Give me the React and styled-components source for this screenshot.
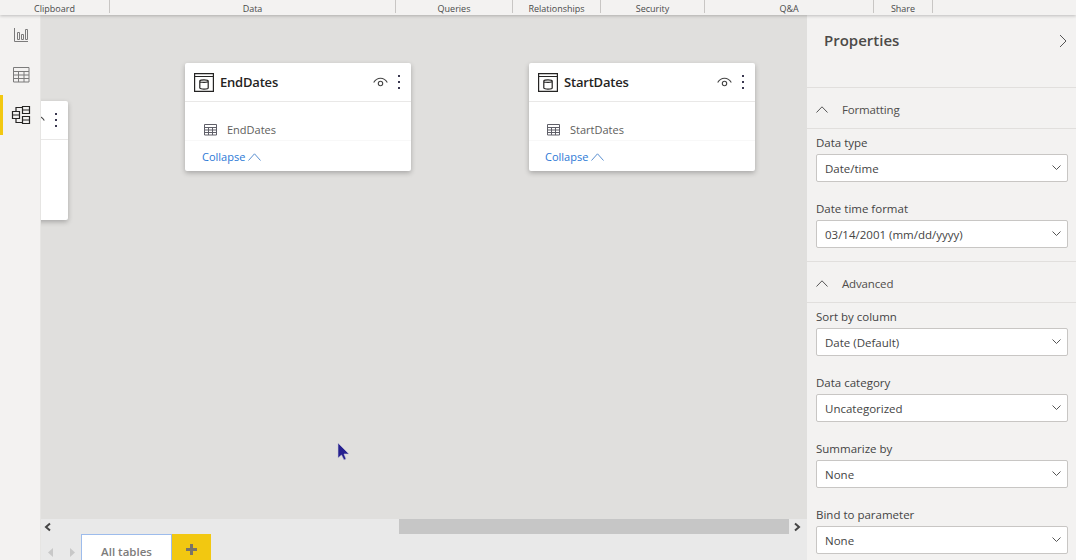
import React from "react";
import styled, { createGlobalStyle } from "styled-components";

const GlobalStyle = createGlobalStyle`
  html, body { margin: 0; padding: 0; height: 100%; overflow: hidden; }
  body { font-family: "Open Sans", "Noto Sans", "Liberation Sans", sans-serif; background: #f3f2f1; }
  * { box-sizing: border-box; }
`;

const ribbonGroups = [
  { label: "Clipboard", width: 110 },
  { label: "Data", width: 286 },
  { label: "Queries", width: 117 },
  { label: "Relationships", width: 88 },
  { label: "Security", width: 104 },
  { label: "Q&A", width: 169 },
  { label: "Share", width: 59 },
];

const tables = [
  { name: "EndDates", x: 144, inset: 9, fieldInset: 19, linkInset: 17 },
  { name: "StartDates", x: 488, inset: 9, fieldInset: 18, linkInset: 16 },
];

const fieldsFormatting = [
  { label: "Data type", value: "Date/time" },
  { label: "Date time format", value: "03/14/2001 (mm/dd/yyyy)" },
];

const fieldsAdvanced = [
  { label: "Sort by column", value: "Date (Default)" },
  { label: "Data category", value: "Uncategorized" },
  { label: "Summarize by", value: "None" },
  { label: "Bind to parameter", value: "None" },
];

const Page = styled.div`
  width: 1076px;
  height: 560px;
  display: flex;
  flex-direction: column;
  overflow: hidden;
`;

const Ribbon = styled.div`
  height: 15px;
  flex: none;
  display: flex;
  background: #f3f2f1;
  box-shadow: 0 1px 3px rgba(0, 0, 0, 0.22);
  position: relative;
  z-index: 2;
`;

const RibbonGroup = styled.div`
  height: 13px;
  width: ${(p) => p.$width}px;
  border-right: 1px solid #c8c6c4;
  font-size: 9px;
  line-height: 17px;
  color: #4a4a4a;
  text-align: center;
`;

const Body = styled.div`
  flex: 1;
  min-height: 0;
  display: flex;
`;

const Nav = styled.nav`
  width: 41px;
  flex: none;
  display: flex;
  flex-direction: column;
  background: #f3f2f1;
  border-right: 1px solid #e6e5e3;
`;

const NavItem = styled.div`
  height: 40px;
  display: flex;
  align-items: center;
  justify-content: center;
  padding-right: 1px;
  margin-left: ${(p) => (p.$active ? 0 : 3)}px;
  border-left: ${(p) => (p.$active ? "3px solid #f2c811" : "none")};
`;

const Main = styled.div`
  width: 766px;
  flex: none;
  display: flex;
  flex-direction: column;
`;

const Canvas = styled.div`
  height: 504px;
  flex: none;
  position: relative;
  overflow: hidden;
  background: #e0dfdd;
`;

const Card = styled.div`
  position: absolute;
  left: ${(p) => p.$x}px;
  top: ${(p) => p.$y}px;
  width: ${(p) => p.$w}px;
  height: ${(p) => p.$h}px;
  background: #fff;
  border-radius: 2px;
  box-shadow: 0 2px 5px rgba(0, 0, 0, 0.25);
  display: flex;
  flex-direction: column;
`;

const CardHeader = styled.div`
  height: 39px;
  flex: none;
  display: flex;
  align-items: center;
  padding: 0 8px 0 ${(p) => p.$inset}px;
  border-bottom: 1px solid #e9e8e7;
`;

const CardTitle = styled.div`
  flex: 1;
  margin-left: 6px;
  font-size: 13px;
  font-weight: 600;
  color: #252423;
  letter-spacing: -0.2px;
`;

const Dots = styled.div`
  width: 3px;
  margin-left: 10px;
  margin-right: 2px;
  display: flex;
  flex-direction: column;
  gap: 4px;
  span {
    width: 2px;
    height: 2px;
    background: #3a3850;
  }
`;

const FieldRow = styled.div`
  height: 39px;
  flex: none;
  padding: 19px 0 0 ${(p) => p.$inset}px;
  display: flex;
  align-items: flex-start;
  gap: 10px;
  font-size: 11px;
  line-height: 18px;
  color: #605e5c;
  border-bottom: 1px solid #f8f8f8;
  svg { margin-top: 3px; }
`;

const CollapseLink = styled.div`
  padding: 7px 0 0 ${(p) => p.$inset}px;
  display: flex;
  align-items: center;
  gap: 3px;
  font-size: 11px;
  line-height: 18px;
  color: #2b79d6;
`;

const Cursor = styled.svg`
  position: absolute;
  left: 296px;
  top: 427px;
`;

const HScroll = styled.div`
  height: 15px;
  flex: none;
  display: flex;
  align-items: center;
  background: #e9e9e9;
`;

const ScrollArrow = styled.div`
  width: ${(p) => p.$w}px;
  flex: none;
  display: flex;
  justify-content: center;
  padding-right: ${(p) => p.$pad || 0}px;
`;

const ScrollTrack = styled.div`
  flex: 1;
  height: 15px;
  padding-left: 344px;
`;

const ScrollThumb = styled.div`
  height: 15px;
  background: #c6c6c6;
`;

const TabBar = styled.div`
  flex: 1;
  min-height: 0;
  display: flex;
  align-items: stretch;
  background: #e9e9e9;
`;

const TabNav = styled.div`
  width: 40px;
  flex: none;
  display: flex;
  align-items: center;
  gap: 17px;
  padding: 10px 0 0 7px;
`;

const Tab = styled.div`
  width: 91px;
  flex: none;
  padding-top: 8px;
  background: #fff;
  border: 1px solid #9dbcec;
  border-bottom: none;
  font-size: 11.5px;
  font-weight: 600;
  line-height: 18px;
  color: #7d7c7b;
  text-align: center;
`;

const AddTab = styled.div`
  width: 39px;
  flex: none;
  display: flex;
  align-items: center;
  justify-content: center;
  padding-top: 5px;
  background: #f2c811;
`;

const Panel = styled.aside`
  flex: 1;
  min-width: 0;
  display: flex;
  flex-direction: column;
  overflow: hidden;
  background: #f3f2f1;
`;

const PanelHead = styled.div`
  height: 73px;
  flex: none;
  padding: 13px 9px 0 17px;
  display: flex;
  justify-content: space-between;
  align-items: flex-start;
  border-bottom: 1px solid #e1dfdd;
`;

const PanelTitle = styled.div`
  font-size: 15px;
  font-weight: 600;
  line-height: 24px;
  color: #4c4a48;
`;

const CollapseChevron = styled.svg`
  margin-top: 6px;
`;

const SectionHead = styled.div`
  height: 41px;
  flex: none;
  display: flex;
  align-items: center;
  gap: 14px;
  padding: 2px 0 0 9px;
  font-size: 11.5px;
  letter-spacing: -0.15px;
  color: #4f4d4b;
  border-bottom: 1px solid #e1dfdd;
`;

const Section = styled.div`
  padding: 5px 8px ${(p) => (p.$last ? 0 : 13)}px 9px;
  display: flex;
  flex-direction: column;
  gap: 18px;
  border-bottom: ${(p) => (p.$last ? "none" : "1px solid #e1dfdd")};
`;

const Field = styled.div`
  display: flex;
  flex-direction: column;
  gap: 2px;
`;

const FieldLabel = styled.label`
  font-size: 11.5px;
  line-height: 18px;
  color: #444;
`;

const Select = styled.div`
  height: 28px;
  display: flex;
  align-items: center;
  justify-content: space-between;
  padding: 0 3px 0 8px;
  background: #fff;
  border: 1px solid #c8c6c4;
  border-radius: 2px;
  font-size: 11.5px;
  color: #444;
`;

const BarsIcon = () => (
  <svg width="16" height="16" viewBox="0 0 16 16" fill="none" stroke="#7b7b7b">
    <path d="M1.5 1v13.5H15M4.5 5.5h2v7h-2zM8.5 7.5h2v5h-2zM12.5 2.5h2v10h-2z" />
  </svg>
);

const GridIcon = () => (
  <svg width="17" height="16" viewBox="0 0 17 16" fill="none" stroke="#7b7b7b">
    <path d="M.5.5h15.5v14.5H.5zM.5 4.5h15.5M.5 8h15.5M.5 11.5h15.5M5.5 4.5v10.5M11 4.5v10.5" />
  </svg>
);

const ModelIcon = () => (
  <svg width="20" height="20" viewBox="0 0 20 20" fill="none" stroke="#252423" strokeWidth="1.2">
    <path d="M1.5 6.5h7v7h-7zM1.5 10h7M11.5 1.5h7v7h-7zM11.5 5h7M11.5 11.5h7v7h-7zM11.5 15h7" />
    <path d="M5 6.5V2.5h6.5M5 13.5v4h6.5" />
  </svg>
);

const TableIcon = () => (
  <svg width="20" height="20" viewBox="0 0 20 20" fill="none" stroke="#252423" strokeWidth="1.2">
    <path d="M.6 1.6h18.8v17.8H.6zM.6 4.5h18.8" />
    <path d="M5.8 9c0-1.6 8.4-1.6 8.4 0v7c0 1.4-8.4 1.4-8.4 0zM5.8 9.3c0 1.5 8.4 1.5 8.4 0" />
  </svg>
);

const EyeIcon = () => (
  <svg width="15" height="12" viewBox="0 0 15 12" fill="none" stroke="#444" strokeWidth="1.1">
    <path d="M.7 6.5C4 .8 11 .8 14.3 6.5" />
    <circle cx="7.5" cy="7.5" r="2.2" />
  </svg>
);

const SmallGridIcon = () => (
  <svg width="13" height="12" viewBox="0 0 13 12" fill="none" stroke="#5f5f68">
    <path d="M.5.5h12v10.5H.5zM.5 3.5h12M.5 6h12M.5 8.5h12M4.5 3.5V11M8.5 3.5V11" />
  </svg>
);

const ChevronUp = ({ size = 12, h = 7, color = "#555" }) => (
  <svg width={size} height={h} viewBox={`0 0 ${size} ${h}`} fill="none" stroke={color}>
    <path d={`M.5 ${h - 0.5}L${size / 2} .8L${size - 0.5} ${h - 0.5}`} />
  </svg>
);

const TableCard = ({ name, x, inset, fieldInset, linkInset }) => (
  <Card $x={x} $y={48} $w={226} $h={108}>
    <CardHeader $inset={inset}>
      <TableIcon />
      <CardTitle>{name}</CardTitle>
      <EyeIcon />
      <Dots><span /><span /><span /></Dots>
    </CardHeader>
    <FieldRow $inset={fieldInset}>
      <SmallGridIcon />
      <span>{name}</span>
    </FieldRow>
    <CollapseLink $inset={linkInset}>
      Collapse
      <ChevronUp size={13} h={8} color="#5b8fd0" />
    </CollapseLink>
  </Card>
);

const SelectField = ({ label, value }) => (
  <Field>
    <FieldLabel>{label}</FieldLabel>
    <Select>
      {value}
      <svg width="16" height="8" viewBox="0 0 16 8" fill="none" stroke="#555">
        <path d="M4.5 1.5L8.5 5.5L12.5 1.5" />
      </svg>
    </Select>
  </Field>
);

export default function App() {
  return (
    <Page>
      <GlobalStyle />
      <Ribbon>
        {ribbonGroups.map((group) => (
          <RibbonGroup key={group.label} $width={group.width}>{group.label}</RibbonGroup>
        ))}
      </Ribbon>
      <Body>
        <Nav>
          <NavItem><BarsIcon /></NavItem>
          <NavItem><GridIcon /></NavItem>
          <NavItem $active><ModelIcon /></NavItem>
        </Nav>
        <Main>
          <Canvas>
            {tables.map((t) => (
              <TableCard key={t.name} {...t} />
            ))}
            <Card $x={-30} $y={86} $w={57} $h={119}>
              <CardHeader $inset={9}>
                <CardTitle />
                <EyeIcon />
                <Dots><span /><span /><span /></Dots>
              </CardHeader>
            </Card>
            <Cursor width="14" height="20" viewBox="0 0 14 20">
              <path d="M1 1L1 16L4.5 13L7 18L9 17L7 12L12 12Z" fill="#26208f" stroke="#c9c9d6" strokeWidth="0.6" />
            </Cursor>
          </Canvas>
          <HScroll>
            <ScrollArrow $w={14}>
              <svg width="8" height="10" viewBox="0 0 8 10" fill="none" stroke="#444" strokeWidth="2">
                <path d="M6 1.5L2 5L6 8.5" />
              </svg>
            </ScrollArrow>
            <ScrollTrack><ScrollThumb /></ScrollTrack>
            <ScrollArrow $w={18} $pad={3}>
              <svg width="8" height="10" viewBox="0 0 8 10" fill="none" stroke="#444" strokeWidth="2">
                <path d="M2 1.5L6 5L2 8.5" />
              </svg>
            </ScrollArrow>
          </HScroll>
          <TabBar>
            <TabNav>
              <svg width="5" height="9" viewBox="0 0 5 9"><path d="M5 0v9L0 4.5z" fill="#c8c8c8" /></svg>
              <svg width="5" height="9" viewBox="0 0 5 9"><path d="M0 0v9l5-4.5z" fill="#c8c8c8" /></svg>
            </TabNav>
            <Tab>All tables</Tab>
            <AddTab>
              <svg width="11" height="11" viewBox="0 0 11 11"><path d="M4 0h3v4h4v3H7v4H4V7H0V4h4z" fill="#7a7467" /></svg>
            </AddTab>
          </TabBar>
        </Main>
        <Panel>
          <PanelHead>
            <PanelTitle>Properties</PanelTitle>
            <CollapseChevron width="8" height="14" viewBox="0 0 8 14" fill="none" stroke="#555">
              <path d="M1 1L7 7L1 13" />
            </CollapseChevron>
          </PanelHead>
          <SectionHead>
            <ChevronUp />
            Formatting
          </SectionHead>
          <Section>
            {fieldsFormatting.map((f) => (
              <SelectField key={f.label} label={f.label} value={f.value} />
            ))}
          </Section>
          <SectionHead>
            <ChevronUp />
            Advanced
          </SectionHead>
          <Section $last>
            {fieldsAdvanced.map((f) => (
              <SelectField key={f.label} label={f.label} value={f.value} />
            ))}
          </Section>
        </Panel>
      </Body>
    </Page>
  );
}
